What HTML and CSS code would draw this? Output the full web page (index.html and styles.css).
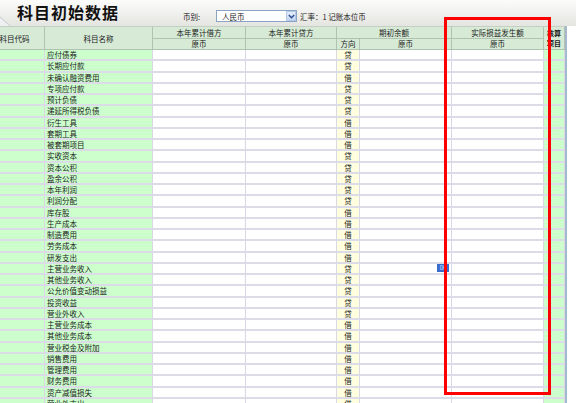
FILE: index.html
```html
<!DOCTYPE html>
<html lang="zh-CN">
<head>
<meta charset="utf-8">
<title>科目初始数据</title>
<link rel="stylesheet" href="styles.css">
</head>
<body>
<div class="page">
  <div class="titlebar">
    <svg class="tab" width="17" height="26" viewBox="0 0 17 26"><polygon points="0,17 10,26 0,26" fill="#eef0f2"/><line x1="0" y1="17" x2="10" y2="26" stroke="#c4c8d0" stroke-width="1"/></svg>
    <h1 class="title">科目初始数据</h1>
    <div class="currency">
      <span class="lbl">币别:</span>
      <div class="select"><span class="val">人民币</span><span class="arrow"><svg width="7" height="5" viewBox="0 0 7 5"><polyline points="0.8,1 3.5,3.8 6.2,1" fill="none" stroke="#2a4a8a" stroke-width="1.3"/></svg></span></div>
      <span class="rate">汇率：1 记账本位币</span>
    </div>
  </div>
  <div class="gridarea">
    <div class="grid">
      <div class="hdr">
        <div class="h code">科目代码</div>
        <div class="h name">科目名称</div>
        <div class="h">本年累计借方</div>
        <div class="h">本年累计贷方</div>
        <div class="h span2">期初余额</div>
        <div class="h">实际损益发生额</div>
        <div class="h acct">核算<br>项目</div>
        <div class="h">原币</div>
        <div class="h">原币</div>
        <div class="h">方向</div>
        <div class="h">原币</div>
        <div class="h">原币</div>
      </div>
      <div class="rows">
        <div class="row"><div class="c g"></div><div class="c g n">应付债券</div><div class="c"></div><div class="c"></div><div class="c d">贷</div><div class="c"></div><div class="c"></div><div class="c g"></div></div>
        <div class="row"><div class="c g"></div><div class="c g n">长期应付款</div><div class="c"></div><div class="c"></div><div class="c d">贷</div><div class="c"></div><div class="c"></div><div class="c g"></div></div>
        <div class="row"><div class="c g"></div><div class="c g n">未确认融资费用</div><div class="c"></div><div class="c"></div><div class="c d">借</div><div class="c"></div><div class="c"></div><div class="c g"></div></div>
        <div class="row"><div class="c g"></div><div class="c g n">专项应付款</div><div class="c"></div><div class="c"></div><div class="c d">贷</div><div class="c"></div><div class="c"></div><div class="c g"></div></div>
        <div class="row"><div class="c g"></div><div class="c g n">预计负债</div><div class="c"></div><div class="c"></div><div class="c d">贷</div><div class="c"></div><div class="c"></div><div class="c g"></div></div>
        <div class="row"><div class="c g"></div><div class="c g n">递延所得税负债</div><div class="c"></div><div class="c"></div><div class="c d">贷</div><div class="c"></div><div class="c"></div><div class="c g"></div></div>
        <div class="row"><div class="c g"></div><div class="c g n">衍生工具</div><div class="c"></div><div class="c"></div><div class="c d">借</div><div class="c"></div><div class="c"></div><div class="c g"></div></div>
        <div class="row"><div class="c g"></div><div class="c g n">套期工具</div><div class="c"></div><div class="c"></div><div class="c d">借</div><div class="c"></div><div class="c"></div><div class="c g"></div></div>
        <div class="row"><div class="c g"></div><div class="c g n">被套期项目</div><div class="c"></div><div class="c"></div><div class="c d">借</div><div class="c"></div><div class="c"></div><div class="c g"></div></div>
        <div class="row"><div class="c g"></div><div class="c g n">实收资本</div><div class="c"></div><div class="c"></div><div class="c d">贷</div><div class="c"></div><div class="c"></div><div class="c g"></div></div>
        <div class="row"><div class="c g"></div><div class="c g n">资本公积</div><div class="c"></div><div class="c"></div><div class="c d">贷</div><div class="c"></div><div class="c"></div><div class="c g"></div></div>
        <div class="row"><div class="c g"></div><div class="c g n">盈余公积</div><div class="c"></div><div class="c"></div><div class="c d">贷</div><div class="c"></div><div class="c"></div><div class="c g"></div></div>
        <div class="row"><div class="c g"></div><div class="c g n">本年利润</div><div class="c"></div><div class="c"></div><div class="c d">贷</div><div class="c"></div><div class="c"></div><div class="c g"></div></div>
        <div class="row"><div class="c g"></div><div class="c g n">利润分配</div><div class="c"></div><div class="c"></div><div class="c d">贷</div><div class="c"></div><div class="c"></div><div class="c g"></div></div>
        <div class="row"><div class="c g"></div><div class="c g n">库存股</div><div class="c"></div><div class="c"></div><div class="c d">借</div><div class="c"></div><div class="c"></div><div class="c g"></div></div>
        <div class="row"><div class="c g"></div><div class="c g n">生产成本</div><div class="c"></div><div class="c"></div><div class="c d">借</div><div class="c"></div><div class="c"></div><div class="c g"></div></div>
        <div class="row"><div class="c g"></div><div class="c g n">制造费用</div><div class="c"></div><div class="c"></div><div class="c d">借</div><div class="c"></div><div class="c"></div><div class="c g"></div></div>
        <div class="row"><div class="c g"></div><div class="c g n">劳务成本</div><div class="c"></div><div class="c"></div><div class="c d">借</div><div class="c"></div><div class="c"></div><div class="c g"></div></div>
        <div class="row"><div class="c g"></div><div class="c g n">研发支出</div><div class="c"></div><div class="c"></div><div class="c d">借</div><div class="c"></div><div class="c"></div><div class="c g"></div></div>
        <div class="row"><div class="c g"></div><div class="c g n">主营业务收入</div><div class="c"></div><div class="c"></div><div class="c d">贷</div><div class="c edit"><span class="selbox">00</span></div><div class="c"></div><div class="c g"></div></div>
        <div class="row"><div class="c g"></div><div class="c g n">其他业务收入</div><div class="c"></div><div class="c"></div><div class="c d">贷</div><div class="c"></div><div class="c"></div><div class="c g"></div></div>
        <div class="row"><div class="c g"></div><div class="c g n">公允价值变动损益</div><div class="c"></div><div class="c"></div><div class="c d">贷</div><div class="c"></div><div class="c"></div><div class="c g"></div></div>
        <div class="row"><div class="c g"></div><div class="c g n">投资收益</div><div class="c"></div><div class="c"></div><div class="c d">贷</div><div class="c"></div><div class="c"></div><div class="c g"></div></div>
        <div class="row"><div class="c g"></div><div class="c g n">营业外收入</div><div class="c"></div><div class="c"></div><div class="c d">贷</div><div class="c"></div><div class="c"></div><div class="c g"></div></div>
        <div class="row"><div class="c g"></div><div class="c g n">主营业务成本</div><div class="c"></div><div class="c"></div><div class="c d">借</div><div class="c"></div><div class="c"></div><div class="c g"></div></div>
        <div class="row"><div class="c g"></div><div class="c g n">其他业务成本</div><div class="c"></div><div class="c"></div><div class="c d">借</div><div class="c"></div><div class="c"></div><div class="c g"></div></div>
        <div class="row"><div class="c g"></div><div class="c g n">营业税金及附加</div><div class="c"></div><div class="c"></div><div class="c d">借</div><div class="c"></div><div class="c"></div><div class="c g"></div></div>
        <div class="row"><div class="c g"></div><div class="c g n">销售费用</div><div class="c"></div><div class="c"></div><div class="c d">借</div><div class="c"></div><div class="c"></div><div class="c g"></div></div>
        <div class="row"><div class="c g"></div><div class="c g n">管理费用</div><div class="c"></div><div class="c"></div><div class="c d">借</div><div class="c"></div><div class="c"></div><div class="c g"></div></div>
        <div class="row"><div class="c g"></div><div class="c g n">财务费用</div><div class="c"></div><div class="c"></div><div class="c d">借</div><div class="c"></div><div class="c"></div><div class="c g"></div></div>
        <div class="row"><div class="c g"></div><div class="c g n">资产减值损失</div><div class="c"></div><div class="c"></div><div class="c d">借</div><div class="c"></div><div class="c"></div><div class="c g"></div></div>
        <div class="row"><div class="c g"></div><div class="c g n">营业外支出</div><div class="c"></div><div class="c"></div><div class="c d">借</div><div class="c"></div><div class="c"></div><div class="c g"></div></div>
      </div>
    </div>
    <div class="rightbar"></div>
  </div>
  <div class="redbox"></div>
</div>
</body>
</html>
```

FILE: styles.css
```css
* { box-sizing: border-box; margin: 0; padding: 0; }
html, body { background: #fff; }
body {
  width: 576px;
  height: 403px;
  overflow: hidden;
  font-family: "Noto Sans CJK SC", "Noto Sans", sans-serif;
  color: #222;
}
.page { position: relative; width: 576px; height: 403px; overflow: hidden; }

.titlebar {
  height: 26px;
  display: flex;
  align-items: flex-start;
  background: linear-gradient(#fcfcfc, #e4e4e0);
}
.tab { flex: none; display: block; }
.title {
  width: 166px;
  flex: none;
  font-size: 16px;
  line-height: 25px;
  font-weight: bold;
  letter-spacing: 1px;
  color: #111;
}
.currency {
  display: flex;
  align-items: center;
  margin-top: 10px;
  height: 12px;
  font-size: 7.5px;
  line-height: 9px;
}
.lbl { width: 33px; flex: none; }
.select {
  width: 81px;
  height: 12px;
  flex: none;
  border: 1px solid #8aa4c4;
  background: #fff;
  display: flex;
  align-items: center;
  padding-left: 5px;
}
.select .val { flex: 1; }
.arrow {
  width: 10px;
  height: 10px;
  background: linear-gradient(#e4eefc, #c4d6f2);
  border: 1px solid #b4c8e8;
  display: flex;
  align-items: center;
  justify-content: center;
}
.arrow svg { display: block; }
.rate { margin-left: 3px; }

.gridarea { display: flex; }
.grid { margin-left: -15px; width: 580px; flex: none; }
.rightbar { width: 2px; flex: none; background: #a6b8cc; }

.hdr {
  display: grid;
  grid-template-columns: 60px 108px 93px 91px 23px 92px 92px 21px;
  grid-template-rows: 11.5px 11.5px;
  border-top: 1px solid #c4d0c4;
}
.h {
  display: flex;
  align-items: center;
  justify-content: center;
  font-size: 7.5px;
  line-height: 9px;
  background: #d6ead6;
  border-right: 1px solid #b0c2b0;
  border-bottom: 1px solid #b0c2b0;
  white-space: nowrap;
}
.h.code { grid-column: 1; grid-row: 1 / 3; }
.h.name { grid-column: 2; grid-row: 1 / 3; }
.h.span2 { grid-column: 5 / 7; }
.h.acct {
  grid-column: 8;
  grid-row: 1 / 3;
  display: block;
  padding-top: 2px;
  font-weight: bold;
  font-size: 7px;
  line-height: 9.5px;
  text-align: center;
}

.row {
  display: grid;
  grid-template-columns: 60px 108px 93px 91px 23px 92px 92px 21px;
  height: 11.25px;
}
.c {
  border-right: 1px solid #d8d8e6;
  border-bottom: 2px solid #dcdce8;
  font-size: 7.5px;
  line-height: 9px;
  display: flex;
  align-items: center;
  background: #fff;
  white-space: nowrap;
  overflow: hidden;
}
.c.g { background: #ccffcc; }
.c.n { padding-left: 2px; }
.c.d { background: #ffffe0; justify-content: center; }
.c.edit { justify-content: flex-end; align-items: flex-start; padding-right: 2px; }
.selbox {
  display: block;
  width: 12px;
  height: 8px;
  background: #3a6cd0;
  color: #dfe8ff;
  font-size: 6px;
  line-height: 8px;
  text-align: center;
}

.redbox {
  position: absolute;
  left: 444px;
  top: 17px;
  width: 107px;
  height: 378px;
  border: 3px solid #ff0000;
}
```
